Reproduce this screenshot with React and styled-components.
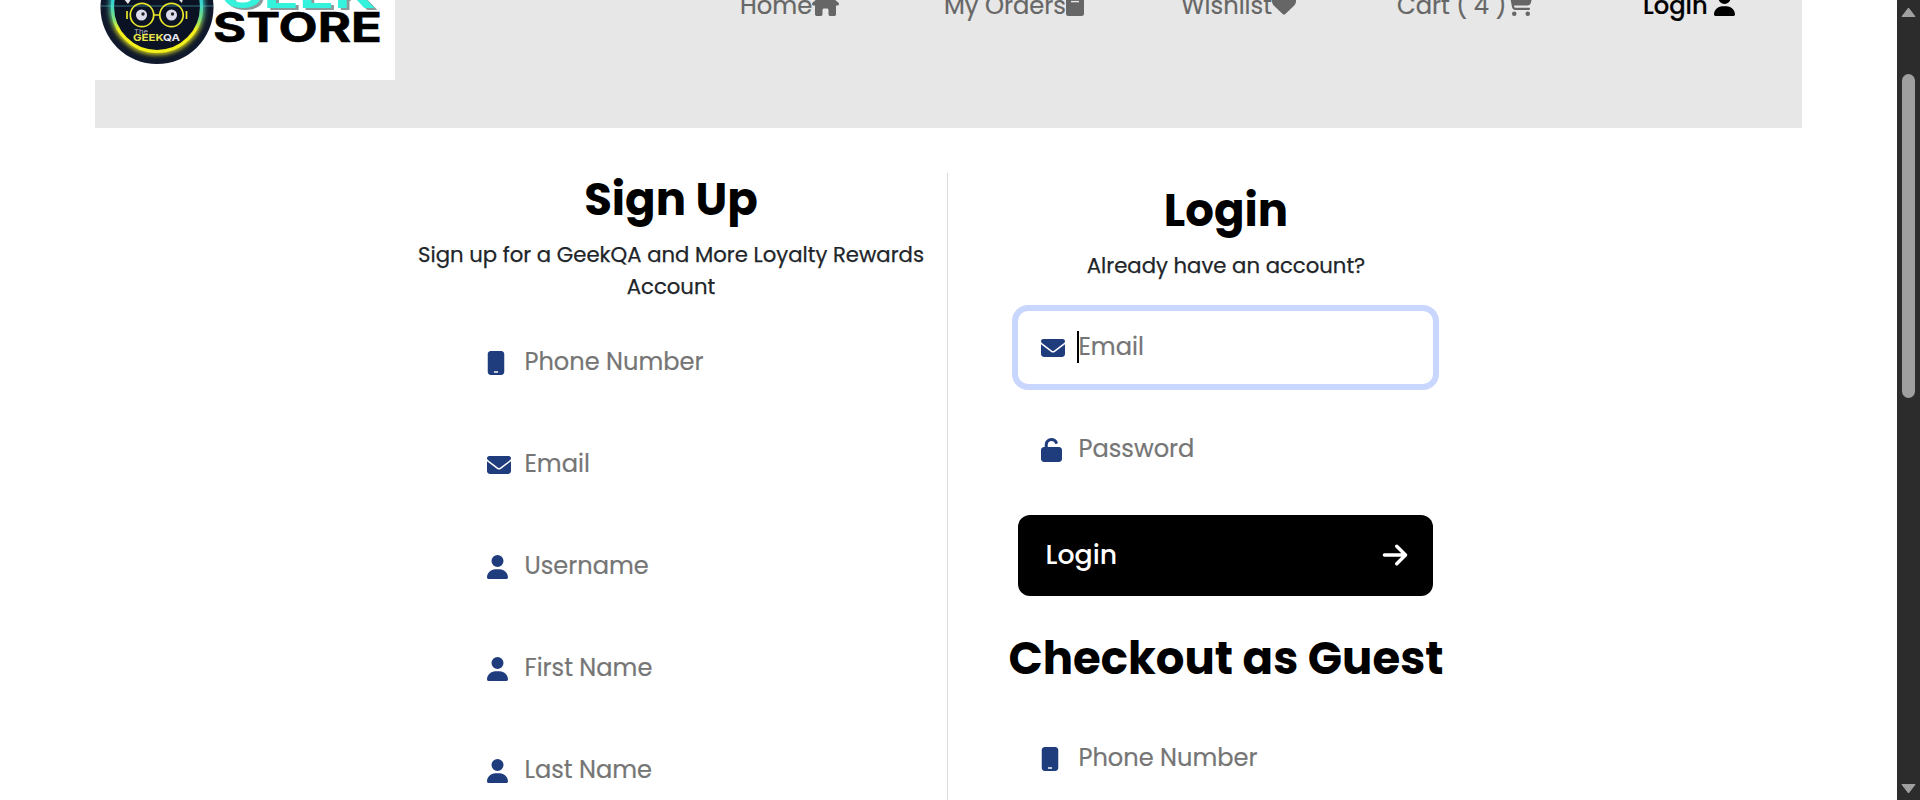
import React from "react";
import styled, { createGlobalStyle } from "styled-components";
import {
  FaHouse, FaHeart, FaCartShopping, FaUser, FaEnvelope, FaUnlock, FaMobile, FaArrowRight,
} from "react-icons/fa6";

const Global = createGlobalStyle`
  * { box-sizing: border-box; }
  body { margin: 0; background: #fff; overflow: hidden; font-family: Poppins, Inter, sans-serif; }
`;
const Screen = styled.div`display: flex; height: 800px; overflow: hidden;`;
const Page = styled.div`flex: 1; min-width: 0; overflow: hidden;`;
const Header = styled.header`
  display: flex; align-items: flex-start; height: 128px;
  margin: 0 95px; background: #e7e7e7; overflow: hidden;
`;
const LogoBox = styled.div`width: 300px; height: 80px; background: #fff; svg { display: block; }`;
const Nav = styled.nav`
  display: grid; grid-template-columns: 204px 237px 216px 246px auto;
  margin: -14px 0 0 345px;
`;
const NavLink = styled.a`
  display: flex; align-items: center; height: 38px; white-space: pre;
  font-size: 24.2px; font-weight: ${(p) => (p.$active ? 500 : 400)};
  color: ${(p) => (p.$active ? "#000" : "#666")};
  -webkit-text-stroke: 0.2px currentColor;
  svg { height: 24px; width: ${(p) => p.$icon}px; margin: -3px 0 0 ${(p) => p.$gap || 0}px; flex: none; }
`;
const Columns = styled.main`display: flex; margin: 45px 0 0 395px;`;
const Column = styled.section`
  display: flex; flex-direction: column; align-items: center;
  width: ${(p) => p.$w}px; height: 640px; padding-top: ${(p) => p.$top || 0}px;
  ${(p) => p.$divided && "border-right: 1px solid #d9dcdf;"}
`;
const Title = styled.h1`
  margin: ${(p) => p.$mt || 0}px 0 0; padding-left: ${(p) => p.$indent || 0}px;
  font-size: 45px; line-height: 50px; font-weight: 700; color: #000; white-space: nowrap;
`;
const Lead = styled.p`
  margin: ${(p) => p.$mt}px 0 0; padding-left: ${(p) => p.$indent || 0}px;
  text-align: center; font-size: 21.2px; line-height: 32px; color: #212529;
  -webkit-text-stroke: 0.25px currentColor;
`;
const Fields = styled.div`display: flex; flex-direction: column; gap: 29px; margin-top: ${(p) => p.$mt}px;`;
const Field = styled.label`
  display: flex; align-items: center; width: 415px; height: 73px; padding-left: 23px;
  border-radius: 10px; background: #fff;
  ${(p) => p.$focused && "box-shadow: 0 0 0 6px #c9d6fd;"}
`;
const FieldIcon = styled.span`
  display: flex; width: 38px; color: #1f3c7c;
  svg { width: 24px; height: 24px; }
`;
const Caret = styled.span`width: 2px; height: 32px; margin: -2px 0 0 -2px; background: #000;`;
const Placeholder = styled.span`
  font-size: 24.1px; line-height: 34px; margin-top: -1px; color: #757575; white-space: nowrap;
  -webkit-text-stroke: 0.2px currentColor;
`;
const Button = styled.button`
  display: flex; align-items: center; justify-content: space-between;
  width: 415px; height: 81px; margin-top: 29px; padding: 0 26px 1px 28px; border: 0; border-radius: 12px;
  background: #000; color: #fff; font: 500 26.8px/1 Poppins, Inter, sans-serif;
  svg { font-size: 28px; margin-right: -2px; }
`;
const Rail = styled.aside`
  display: flex; flex-direction: column; align-items: center; width: 23px; height: 800px;
  padding: 7px 0 6px; background: #2c2c2c;
  svg { display: block; }
`;
const Thumb = styled.div`width: 13px; height: 324px; margin: 57px 0 auto; border-radius: 7px; background: #9f9f9f;`;
const Wordmark = styled.text`
  font: 700 ${(p) => p.$size}px Inter, sans-serif;
  text-shadow: ${(p) => (p.$shade ? "2px 2px 0 #8a9a9a" : "none")};
`;

const OrdersIcon = () => (
  <svg viewBox="0 0 18 24" fill="currentColor">
    <path d="M2.500 0H15.500A2.300 2.300 0 0 1 18 2.300V21.500A2.500 2.500 0 0 1 15.500 24H2.500A2.500 2.500 0 0 1 0 21.500V2.300A2.300 2.300 0 0 1 2.500 0Z" />
    <path d="M5 9.600H13" stroke="#e7e7e7" strokeWidth="1.400" />
  </svg>
);

const Logo = () => (
  <svg width="300" height="80" viewBox="0 0 300 80">
    <defs>
      <linearGradient id="ring" x1="0" y1="0" x2="0" y2="1">
        <stop offset="0.45" stopColor="#35d6d0" />
        <stop offset="0.64" stopColor="#7fe07a" />
        <stop offset="0.76" stopColor="#f4f01c" />
      </linearGradient>
      <filter id="glow" x="-20%" y="-20%" width="140%" height="140%"><feGaussianBlur stdDeviation="2.2" /></filter>
    </defs>
    <circle cx="62" cy="7.500" r="56.500" fill="#101a2c" />
    <circle cx="62" cy="7" r="45" fill="none" stroke="url(#ring)" strokeWidth="6" filter="url(#glow)" opacity=".8" />
    <circle cx="62" cy="7" r="44.500" fill="#0b1224" stroke="url(#ring)" strokeWidth="3.200" />
    <path d="M6 6H118" stroke="#5fd3dd" strokeWidth="1" opacity=".5" />
    <path d="M28 -2L33 4L37 -2ZM82 -2L87 3L88 -2Z" fill="#e8e8ee" />
    <g fill="none" stroke="#e9e62b" strokeWidth="1.700">
      <circle cx="47" cy="15" r="11.700" />
      <circle cx="76.500" cy="15" r="11.700" />
      <path d="M59 15H64.500M32 11V19M91.500 11V19" />
    </g>
    <circle cx="46.500" cy="15" r="5.500" fill="#dcdcec" />
    <circle cx="76.500" cy="15" r="5.500" fill="#dcdcec" />
    <circle cx="48" cy="14" r="1.700" fill="#222" />
    <circle cx="77.500" cy="14" r="1.700" fill="#222" />
    <text x="39" y="33.500" fontFamily="Inter, sans-serif" fontSize="6.500" fill="#b9b9c4" textLength="14" lengthAdjust="spacingAndGlyphs">The</text>
    <Wordmark $size={9.5} x="38" y="41" fill="#e9e44a" textLength="47" lengthAdjust="spacingAndGlyphs">
      GEEK<tspan fill="#e6e6ee">QA</tspan>
    </Wordmark>
    <Wordmark $size={41} $shade x="125" y="7.500" fill="#35f2dc" textLength="156" lengthAdjust="spacingAndGlyphs">GEEK</Wordmark>
    <Wordmark $size={41} x="118" y="41.500" fill="#000" stroke="#000" strokeWidth=".6" textLength="169" lengthAdjust="spacingAndGlyphs">STORE</Wordmark>
  </svg>
);

const Row = ({ icon: Icon, text, focused }) => (
  <Field $focused={focused}>
    <FieldIcon><Icon preserveAspectRatio="xMinYMid meet" /></FieldIcon>
    {focused && <Caret />}
    <Placeholder>{text}</Placeholder>
  </Field>
);

export default function App() {
  return (
    <>
      <Global />
      <Screen>
        <Page>
          <Header>
            <LogoBox><Logo /></LogoBox>
            <Nav>
              <NavLink $icon={27}>Home<FaHouse /></NavLink>
              <NavLink $icon={18}>My Orders<OrdersIcon /></NavLink>
              <NavLink $icon={24}>Wishlist<FaHeart /></NavLink>
              <NavLink $icon={27}>Cart ( 4 )<FaCartShopping /></NavLink>
              <NavLink $icon={21} $active $gap={6}>Login<FaUser /></NavLink>
            </Nav>
          </Header>
          <Columns>
            <Column $w={553} $divided>
              <Title $mt={2}>Sign Up</Title>
              <Lead $mt={14}>Sign up for a GeekQA and More Loyalty Rewards<br />Account</Lead>
              <Fields $mt={23}>
                <Row icon={FaMobile} text="Phone Number" />
                <Row icon={FaEnvelope} text="Email" />
                <Row icon={FaUser} text="Username" />
                <Row icon={FaUser} text="First Name" />
                <Row icon={FaUser} text="Last Name" />
              </Fields>
            </Column>
            <Column $w={554} $top={13}>
              <Title $indent={2}>Login</Title>
              <Lead $mt={14} $indent={2}>Already have an account?</Lead>
              <Fields $mt={29}>
                <Row icon={FaEnvelope} text="Email" focused />
                <Row icon={FaUnlock} text="Password" />
              </Fields>
              <Button>Login<FaArrowRight /></Button>
              <Title $mt={38} $indent={2}>Checkout as Guest</Title>
              <Fields $mt={38}>
                <Row icon={FaMobile} text="Phone Number" />
              </Fields>
            </Column>
          </Columns>
        </Page>
        <Rail>
          <svg width="15" height="10" viewBox="0 0 15 10"><path d="M7.500 1L14 9.500H1Z" fill="#a0a0a0" stroke="#a0a0a0" strokeLinejoin="round" /></svg>
          <Thumb />
          <svg width="15" height="10" viewBox="0 0 15 10"><path d="M7.500 9L14 .5H1Z" fill="#a0a0a0" stroke="#a0a0a0" strokeLinejoin="round" /></svg>
        </Rail>
      </Screen>
    </>
  );
}
